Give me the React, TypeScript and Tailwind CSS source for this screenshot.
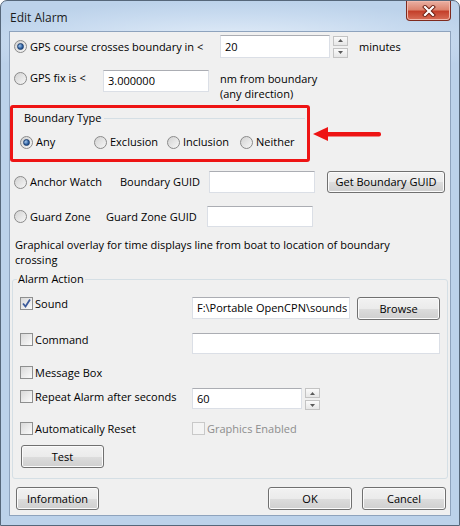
import React from "react";

function Radio({ checked = false }: { checked?: boolean }) {
  return (
    <span className="w-[13px] h-[13px] shrink-0 rounded-full border border-[#8a8a8a] bg-[linear-gradient(135deg,#d2d2d2,#f7f7f7)] flex items-center justify-center">
      {checked && (
        <span className="w-[7px] h-[7px] rounded-full border border-[#1d3f70] bg-[radial-gradient(circle_at_35%_35%,#a4c6ec,#2b5e9e_60%,#183d73)]" />
      )}
    </span>
  );
}

function Check({ checked = false, disabled = false }: { checked?: boolean; disabled?: boolean }) {
  return (
    <span
      className={
        disabled
          ? "w-[13px] h-[13px] shrink-0 border border-[#c9c9c9] bg-[#f4f4f4]"
          : "w-[13px] h-[13px] shrink-0 border border-[#8e8f8f] bg-[linear-gradient(135deg,#d9d9d9,#fbfbfb)] flex items-center justify-center"
      }
    >
      {checked && (
        <svg width="11" height="11" viewBox="0 0 11 11">
          <path d="M2 5.5 L4.5 8.5 L9 1.5" fill="none" stroke="#3b5a9a" strokeWidth="1.8" />
        </svg>
      )}
    </span>
  );
}

function Btn({ children, className = "" }: { children: React.ReactNode; className?: string }) {
  return (
    <div
      className={`flex items-center justify-center rounded-[3px] border border-[#707070] bg-[linear-gradient(#f2f2f2,#ebebeb_50%,#dddddd_50%,#cfcfcf)] shadow-[inset_0_0_0_1px_#fbfbfb] ${className}`}
    >
      {children}
    </div>
  );
}

function Field({ value = "", className = "" }: { value?: string; className?: string }) {
  return (
    <div
      className={`bg-white border border-[#dbdfe6] border-t-[#abadb3] flex items-center pl-[4px] overflow-hidden whitespace-nowrap ${className}`}
    >
      <span className="truncate-none overflow-hidden">{value}</span>
    </div>
  );
}

function Spin({ className = "" }: { className?: string }) {
  return (
    <div className={`w-[15px] flex flex-col justify-between ${className}`}>
      <div className="h-[10px] border border-[#c3c3c3] bg-[linear-gradient(#fafafa,#e6e6e6)] flex items-center justify-center">
        <svg width="5" height="3" viewBox="0 0 5 3">
          <path d="M0 3 L2.5 0 L5 3 Z" fill="#5a5a5a" />
        </svg>
      </div>
      <div className="h-[10px] border border-[#c3c3c3] bg-[linear-gradient(#fafafa,#e6e6e6)] flex items-center justify-center">
        <svg width="5" height="3" viewBox="0 0 5 3">
          <path d="M0 0 L2.5 3 L5 0 Z" fill="#5a5a5a" />
        </svg>
      </div>
    </div>
  );
}

export default function App() {
  return (
    <div className="w-[460px] h-[526px] bg-white font-['Open_Sans','Noto_Sans',sans-serif] text-[11px] text-black leading-[16px]">
      <div className="w-[460px] h-[526px] rounded-t-[7px] border border-[#56677a] bg-[radial-gradient(ellipse_60%_40px_at_50%_40px,#e4eef9,#c7daef_70%,#bcd2ea)] flex flex-col">
        {/* title bar */}
        <div className="h-[30px] flex items-start justify-between">
          <div className="pl-[9px] pt-[9px] text-[12px] text-[#1b1b1b]">Edit Alarm</div>
          <div className="mr-[8px] w-[45px] h-[20px] rounded-b-[4px] border border-t-0 border-[#7e2a1e] bg-[linear-gradient(#eab0a3,#dd8570_45%,#c4402b_55%,#d86e58)] shadow-[inset_0_0_0_1px_#f1b8ab] flex items-center justify-center">
            <svg width="14" height="12" viewBox="0 0 14 12">
              <path d="M3 2 L11 10 M11 2 L3 10" stroke="#6a1c10" strokeWidth="4" strokeLinecap="square" />
              <path d="M3 2 L11 10 M11 2 L3 10" stroke="#ffffff" strokeWidth="2.2" strokeLinecap="square" />
            </svg>
          </div>
        </div>

        {/* client area */}
        <div className="mx-[8px] h-[485px] border border-[#8ea3bd] bg-[#f0f0f0] flex flex-col">
          {/* GPS course row */}
          <div className="mt-[3px] h-[23px] flex items-center">
            <div className="w-[210px] pl-[4px] flex items-center gap-[3px]">
              <Radio checked />
              <span>GPS course crosses boundary in &lt;</span>
            </div>
            <Field value="20" className="w-[110px] h-[23px]" />
            <Spin className="ml-[3px] h-[22px]" />
            <span className="ml-[11px]">minutes</span>
          </div>

          {/* GPS fix row */}
          <div className="mt-[12px] h-[35px] flex items-start">
            <div className="w-[93px] h-[16px] pl-[4px] flex items-center gap-[3px]">
              <Radio />
              <span>GPS fix is &lt;</span>
            </div>
            <Field value="3.000000" className="w-[106px] h-[22px]" />
            <div className="ml-[11px] pt-[1px] leading-[15px]">
              <div>nm from boundary</div>
              <div>(any direction)</div>
            </div>
          </div>

          {/* boundary type (highlighted) */}
          <div className="h-[57px] flex items-center">
            <div className="w-[300px] h-[57px] border-[3px] border-[#ee1414] rounded-[3px] flex flex-col">
              <div className="mt-[2px] flex items-center">
                <span className="pl-[11px]">Boundary Type</span>
                <span className="flex-1 h-px bg-[#d5dfe5] ml-[3px] mr-[2px]" />
              </div>
              <div className="mt-[8px] h-[16px] pl-[7px] flex items-center">
                <div className="w-[74px] flex items-center gap-[3px]">
                  <Radio checked />
                  <span>Any</span>
                </div>
                <div className="w-[73px] flex items-center gap-[3px]">
                  <Radio />
                  <span>Exclusion</span>
                </div>
                <div className="w-[73px] flex items-center gap-[3px]">
                  <Radio />
                  <span>Inclusion</span>
                </div>
                <div className="flex items-center gap-[3px]">
                  <Radio />
                  <span>Neither</span>
                </div>
              </div>
            </div>
            <svg className="ml-[3px]" width="70" height="14" viewBox="0 0 70 14">
              <path d="M0 7 L15 0 L15 14 Z" fill="#ee1414" />
              <rect x="12" y="5" width="56" height="4.5" rx="2" fill="#ee1414" />
            </svg>
          </div>

          {/* anchor watch */}
          <div className="mt-[9px] h-[22px] flex items-center">
            <div className="w-[110px] pl-[4px] flex items-center gap-[3px]">
              <Radio />
              <span>Anchor Watch</span>
            </div>
            <span className="w-[89px]">Boundary GUID</span>
            <Field className="w-[106px] h-[22px]" />
            <Btn className="ml-[12px] w-[118px] h-[22px]">Get Boundary GUID</Btn>
          </div>

          {/* guard zone */}
          <div className="mt-[13px] h-[21px] flex items-center">
            <div className="w-[96px] pl-[4px] flex items-center gap-[3px]">
              <Radio />
              <span>Guard Zone</span>
            </div>
            <span className="w-[101px]">Guard Zone GUID</span>
            <Field className="w-[106px] h-[21px]" />
          </div>

          <div className="mt-[10px] pl-[5px] leading-[15px]">
            Graphical overlay for time displays line from boat to location of boundary
            <br />
            crossing
          </div>

          {/* alarm action */}
          <div className="mt-[12px] mx-[2px] h-[200px] border border-[#d5dfe5] rounded-[3px] flex flex-col">
            <div className="-mt-[9px] ml-[4px] px-[1px] w-fit bg-[#f0f0f0]">Alarm Action</div>

            <div className="mt-[10px] h-[23px] flex items-start">
              <div className="w-[179px] h-[13px] pl-[7px] flex items-center gap-[2px]">
                <Check checked />
                <span>Sound</span>
              </div>
              <Field value="F:\Portable OpenCPN\sounds" className="w-[158px] h-[22px]" />
              <Btn className="ml-[7px] w-[83px] h-[23px]">Browse</Btn>
            </div>

            <div className="mt-[13px] h-[21px] flex items-start">
              <div className="w-[179px] h-[13px] pl-[7px] flex items-center gap-[2px]">
                <Check />
                <span>Command</span>
              </div>
              <Field className="w-[248px] h-[21px]" />
            </div>

            <div className="mt-[12px] h-[13px] flex items-center">
              <div className="pl-[7px] flex items-center gap-[2px]">
                <Check />
                <span>Message Box</span>
              </div>
            </div>

            <div className="mt-[9px] h-[22px] flex items-start">
              <div className="w-[179px] h-[13px] mt-[2px] pl-[7px] flex items-center gap-[2px]">
                <Check />
                <span>Repeat Alarm after seconds</span>
              </div>
              <Field value="60" className="w-[110px] h-[21px]" />
              <Spin className="ml-[3px] h-[22px]" />
            </div>

            <div className="mt-[12px] h-[13px] flex items-center">
              <div className="w-[179px] pl-[7px] flex items-center gap-[2px]">
                <Check />
                <span>Automatically Reset</span>
              </div>
              <div className="flex items-center gap-[2px]">
                <Check disabled />
                <span className="text-[#8d8d8d]">Graphics Enabled</span>
              </div>
            </div>

            <Btn className="mt-[10px] ml-[8px] w-[83px] h-[23px]">Test</Btn>
          </div>

          {/* bottom buttons */}
          <div className="mt-[8px] flex items-center pr-[4px]">
            <Btn className="ml-[6px] w-[83px] h-[23px]">Information</Btn>
            <Btn className="ml-auto w-[84px] h-[23px]">OK</Btn>
            <Btn className="ml-[10px] w-[84px] h-[23px]">Cancel</Btn>
          </div>
        </div>
      </div>
    </div>
  );
}
